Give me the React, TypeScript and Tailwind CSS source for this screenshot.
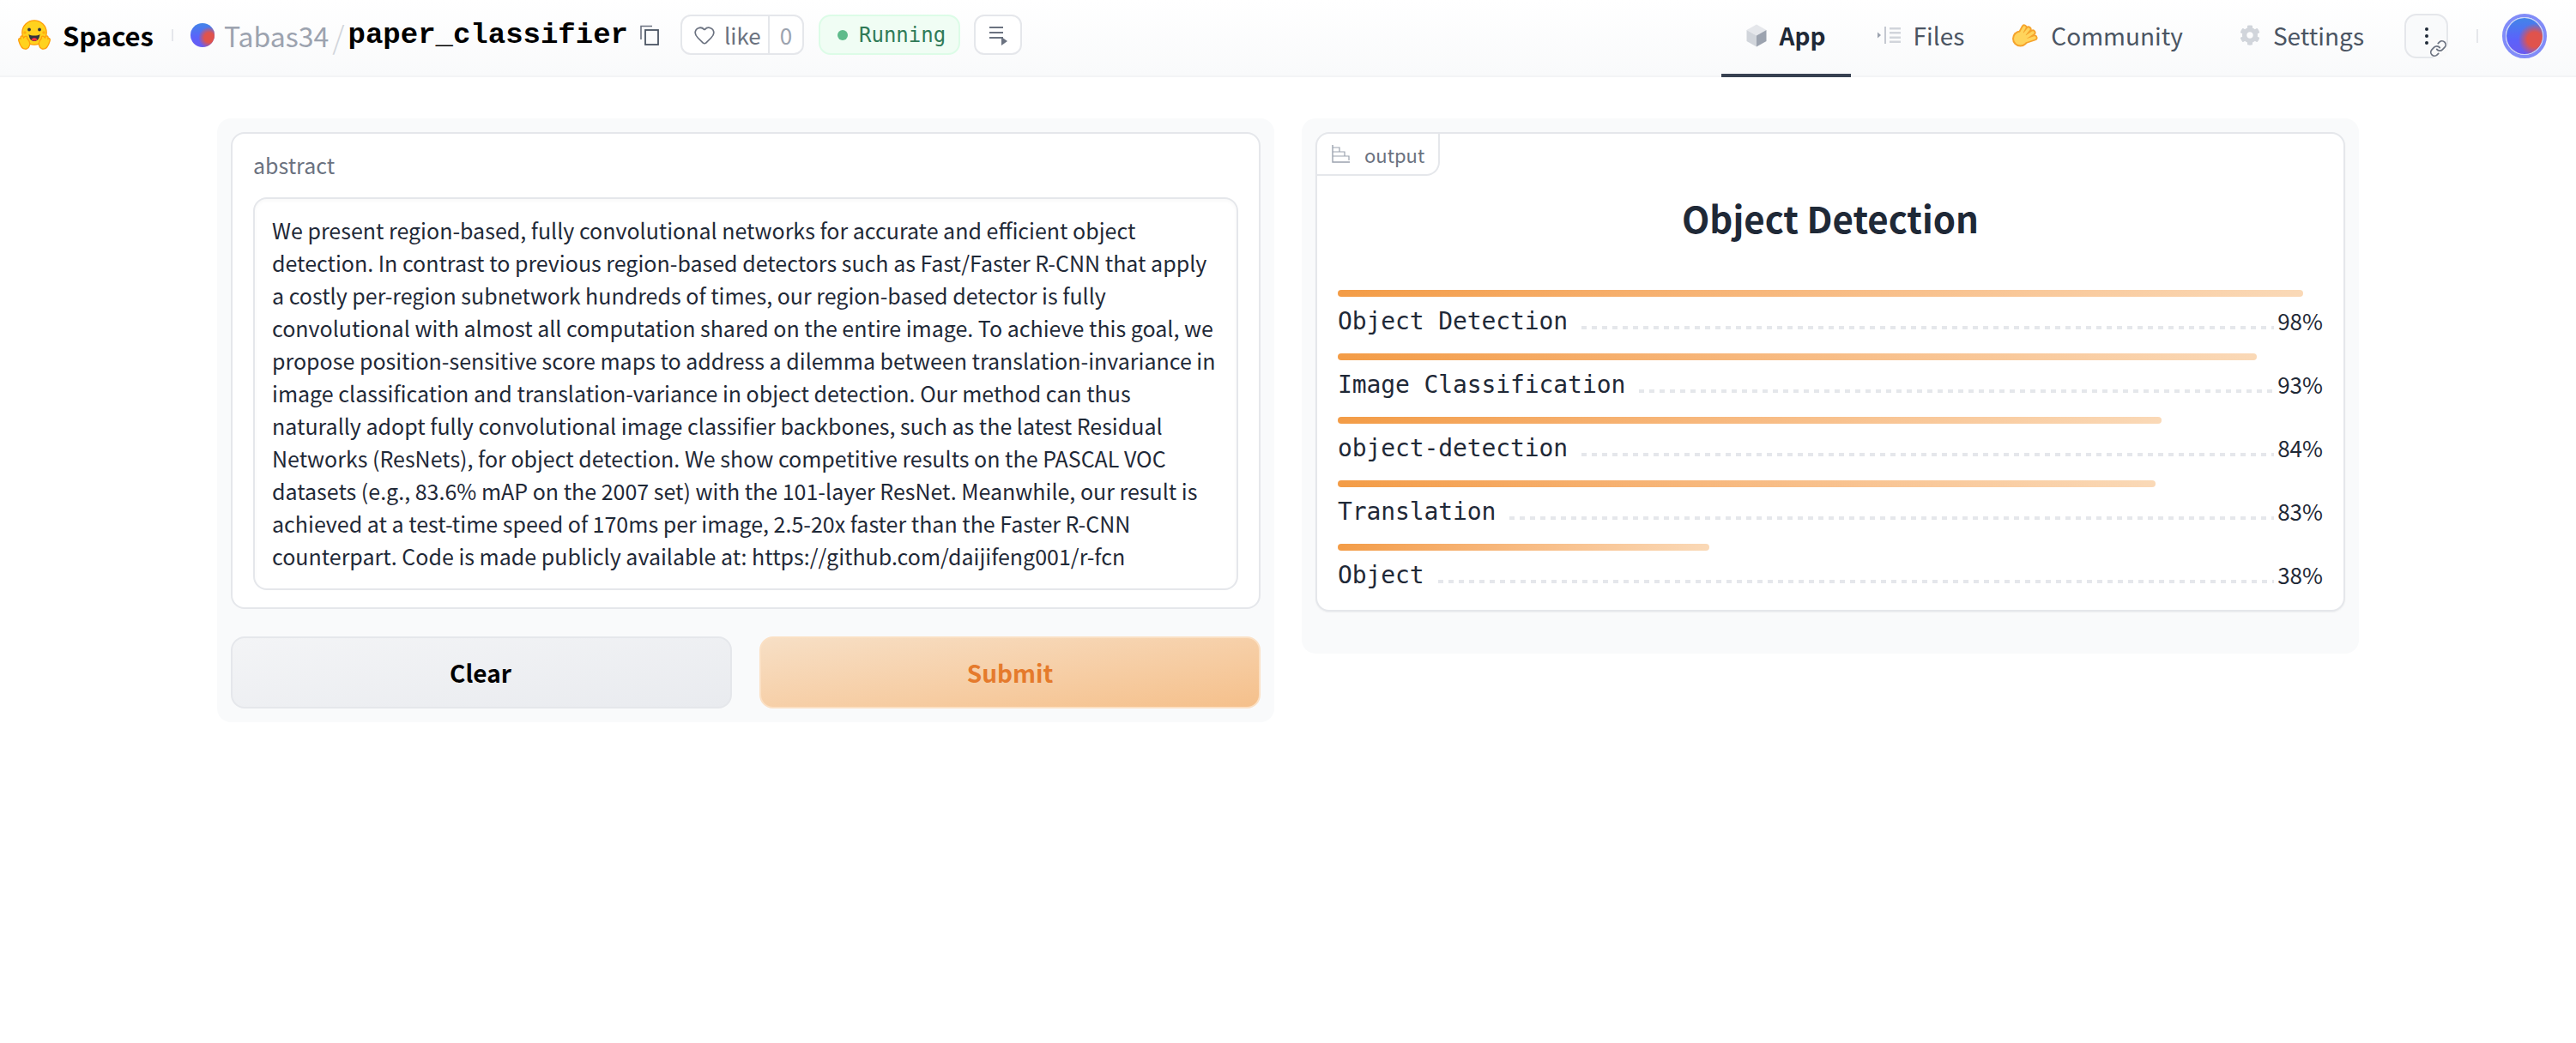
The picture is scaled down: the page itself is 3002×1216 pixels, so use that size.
import type { ReactNode } from "react";
import { Heart, Link } from "lucide-react";
import { FaCog } from "react-icons/fa";

const sans = "font-['Noto_Sans_CJK_JP',sans-serif]";
const mono = "font-['DejaVu_Sans_Mono',monospace]";
const monoBold = "font-['Liberation_Mono',monospace]";

const ABSTRACT =
  "We present region-based, fully convolutional networks for accurate and efficient object detection. In contrast to previous region-based detectors such as Fast/Faster R-CNN that apply a costly per-region subnetwork hundreds of times, our region-based detector is fully convolutional with almost all computation shared on the entire image. To achieve this goal, we propose position-sensitive score maps to address a dilemma between translation-invariance in image classification and translation-variance in object detection. Our method can thus naturally adopt fully convolutional image classifier backbones, such as the latest Residual Networks (ResNets), for object detection. We show competitive results on the PASCAL VOC datasets (e.g., 83.6% mAP on the 2007 set) with the 101-layer ResNet. Meanwhile, our result is achieved at a test-time speed of 170ms per image, 2.5-20x faster than the Faster R-CNN counterpart. Code is made publicly available at: https://github.com/daijifeng001/r-fcn";

const RESULTS = [
  { label: "Object Detection", pct: 98, width: 98 },
  { label: "Image Classification", pct: 93, width: 93.3 },
  { label: "object-detection", pct: 84, width: 83.6 },
  { label: "Translation", pct: 83, width: 83 },
  { label: "Object", pct: 38, width: 37.7 },
];

function HfLogo() {
  return (
    <svg width="38" height="35" viewBox="0 0 38 35" className="shrink-0">
      <circle cx="19" cy="15" r="14.200" fill="#FFD21E" stroke="#FF9D0B" strokeWidth="1.3" />
      <circle cx="13" cy="11.500" r="1.900" fill="#32343D" />
      <circle cx="25" cy="11.500" r="1.900" fill="#32343D" />
      <circle cx="8" cy="15" r="1.700" fill="#FF9D0B" opacity="0.7" />
      <circle cx="30" cy="15" r="1.700" fill="#FF9D0B" opacity="0.7" />
      <path d="M12.500 17 C15 19 23 19 25.500 17 C25 23 22 25 19 25 C16 25 13 23 12.500 17Z" fill="#32343D" />
      <path d="M15.500 23 C17 20.800 21 20.800 22.500 23 C21 25.200 17 25.200 15.500 23Z" fill="#FF323D" />
      <path d="M1 25 C0 22 2 21 3 22 L3 20 C4 18 6 19 6.500 21 L8 19.500 C10 18.500 11 20 10.500 21.500 L12 23.500 C15 27 14 32 10 34 C6 35 3 32 1 25Z" fill="#FFD21E" stroke="#FF9D0B" strokeWidth="1.300" />
      <path d="M37 25 C38 22 36 21 35 22 L35 20 C34 18 32 19 31.500 21 L30 19.500 C28 18.500 27 20 27.500 21.500 L26 23.500 C23 27 24 32 28 34 C32 35 35 32 37 25Z" fill="#FFD21E" stroke="#FF9D0B" strokeWidth="1.300" />
    </svg>
  );
}

function CopyIcon() {
  return (
    <svg width="22" height="24" viewBox="0 0 22 24" fill="none" className="shrink-0">
      <path d="M1 17V1.500H14" stroke="#6b7280" strokeWidth="1.600" />
      <rect x="6" y="6" width="15" height="17" stroke="#4b5563" strokeWidth="1.800" />
    </svg>
  );
}

function QueueIcon() {
  return (
    <svg width="22" height="24" viewBox="0 0 22 24" className="shrink-0">
      <path d="M1 2h16v2H1zM1 8h16v2H1zM1 14h16v2H1z" fill="#6b7280" />
      <path d="M15 14l7 5-7 5z" fill="#6b7280" />
    </svg>
  );
}

function CubeIcon() {
  return (
    <svg width="24" height="27" viewBox="0 0 24 27" className="shrink-0">
      <path d="M12 0.500 L23.500 7 L12 13.500 L0.500 7Z" fill="#e5e7eb" />
      <path d="M0.500 7 L12 13.500 V26.500 L0.500 20Z" fill="#d1d5db" />
      <path d="M23.500 7 L12 13.500 V26.500 L23.500 20Z" fill="#9ca3af" />
    </svg>
  );
}

function FilesIcon() {
  return (
    <svg width="27" height="20" viewBox="0 0 27 20" className="shrink-0">
      <path d="M0 6.500l4 3.500-4 3.500z" fill="#9ca3af" />
      <path d="M8 0h2v20H8z" fill="#c5c9d1" />
      <path d="M14 1h13v2.500H14zM14 6h13v2.500H14zM14 11.500h13v2.500H14zM14 16.500h13v2.500H14z" fill="#d1d5db" />
    </svg>
  );
}

function WaveIcon() {
  const d = "M9 18 L16 5 M12 18 L21 7 M14 19 L26 11 M16 21 L28 17";
  return (
    <svg width="32" height="28" viewBox="0 0 32 28" className="shrink-0">
      <g stroke="#F5A32C" strokeLinecap="round" fill="none">
        <path d={d} strokeWidth="7" />
      </g>
      <circle cx="11.500" cy="18" r="9.500" fill="#F5A32C" />
      <g stroke="#FFD45C" strokeLinecap="round" fill="none">
        <path d={d} strokeWidth="3.500" />
      </g>
      <circle cx="11.500" cy="18" r="7.500" fill="#FFD45C" />
    </svg>
  );
}

function BarsIcon() {
  return (
    <svg width="21" height="21" viewBox="0 0 21 21" fill="none" className="shrink-0">
      <path d="M1 0v20h20" stroke="#9ca3af" strokeWidth="1.400" />
      <path d="M1 3h8v5H1M1 8h14v5H1M1 13h19v5" stroke="#9ca3af" strokeWidth="1.200" />
    </svg>
  );
}

function Avatar({ size }: { size: number }) {
  return (
    <svg width={size} height={size} viewBox="0 0 28 28" className="shrink-0">
      <defs>
        <linearGradient id={`avb${size}`} x1="0.500" y1="0" x2="0.500" y2="1">
          <stop offset="0" stopColor="#4285e8" />
          <stop offset="0.6" stopColor="#5b62fb" />
          <stop offset="1" stopColor="#6a5cf0" />
        </linearGradient>
        <radialGradient id={`avr${size}`} cx="0.780" cy="0.600" r="0.450">
          <stop offset="0.45" stopColor="#e0534c" />
          <stop offset="1" stopColor="#e0534c" stopOpacity="0" />
        </radialGradient>
      </defs>
      <circle cx="14" cy="14" r="14" fill={`url(#avb${size})`} />
      <circle cx="14" cy="14" r="14" fill={`url(#avr${size})`} />
    </svg>
  );
}

function NavTab({
  icon,
  label,
  active,
  className = "",
}: {
  icon: ReactNode;
  label: string;
  active?: boolean;
  className?: string;
}) {
  return (
    <div
      className={`flex h-[90px] items-center gap-[15px] border-b-4 px-[29px] pb-[4px] text-[28px] ${
        active ? "border-[#374151] font-semibold text-[#1f2937]" : "border-transparent text-[#4b5563]"
      } ${className}`}
    >
      {icon}
      <span className="leading-[40px]">{label}</span>
    </div>
  );
}

export default function App() {
  return (
    <div className={`min-h-[1216px] w-[3002px] bg-white ${sans}`}>
      <header className="flex h-[90px] items-start border-b-2 border-[#f3f4f6] bg-gradient-to-b from-white to-[#f9fafb] pl-[21px] pr-[34px]">
        <div className="flex h-[81px] items-center">
          <HfLogo />
          <span className="ml-[14px] text-[31px] font-bold leading-[40px] text-black">Spaces</span>
          <span className="ml-[21px] h-[14px] w-[2px] bg-[#e5e7eb]" />
          <span className="ml-[20px]">
            <Avatar size={28} />
          </span>
          <span className="ml-[11px] text-[32px] leading-[40px] text-[#9ca3af]">Tabas34</span>
          <span className="ml-[4px] text-[36px] font-light leading-[40px] text-[#d1d5db]">/</span>
          <span className={`ml-[4px] text-[34px] font-bold leading-[40px] text-black ${monoBold}`}>paper_classifier</span>
          <span className="ml-[14px]">
            <CopyIcon />
          </span>
          <div className="ml-[25px] flex h-[47px] w-[144px] items-stretch rounded-[12px] border-2 border-[#e5e7eb] bg-white text-[26px] text-[#6b7280]">
            <div className="flex flex-1 items-center gap-[10px] pl-[13px]">
              <Heart size={26} strokeWidth={1.6} className="text-[#6b7280]" />
              <span className="leading-[36px]">like</span>
            </div>
            <div className="flex w-[40px] items-center justify-center border-l-2 border-[#e5e7eb] text-[#9ca3af]">0</div>
          </div>
          <div className="ml-[17px] flex h-[47px] w-[165px] items-center gap-[13px] rounded-[14px] border-2 border-[#dcfce7] bg-[#f0fdf4] pl-[20px] text-[24px] text-[#2f7a57]">
            <span className="h-[12px] w-[12px] rounded-full bg-[#5fbb8b]" />
            <span className={`leading-[36px] ${mono}`}>Running</span>
          </div>
          <div className="ml-[16px] flex h-[47px] w-[56px] items-center justify-center rounded-[12px] border-2 border-[#e5e7eb] bg-white">
            <QueueIcon />
          </div>
        </div>
        <nav className="ml-auto flex items-center">
          <NavTab icon={<CubeIcon />} label="App" active />
          <NavTab icon={<FilesIcon />} label="Files" className="ml-[2px]" />
          <NavTab icon={<WaveIcon />} label="Community" className="-ml-[4px]" />
          <NavTab icon={<FaCog size={24} className="text-[#d1d5db]" />} label="Settings" className="ml-[8px]" />
        </nav>
        <div className="flex h-[84px] items-center">
          <div className="relative ml-[18px] flex h-[52px] w-[51px] items-center justify-center rounded-[14px] border-2 border-[#e5e7eb] bg-[#f9fafb]">
            <span className="flex flex-col gap-[4px]">
              <span className="h-[4px] w-[4px] rounded-full bg-[#1f2937]" />
              <span className="h-[4px] w-[4px] rounded-full bg-[#1f2937]" />
              <span className="h-[4px] w-[4px] rounded-full bg-[#1f2937]" />
            </span>
            <span className="absolute -bottom-[2px] -right-[2px] flex h-[24px] w-[24px] items-center justify-center rounded-full bg-[#fafafa]">
              <Link size={21} strokeWidth={2} className="text-[#6b7280]" />
            </span>
          </div>
          <span className="ml-[33px] h-[16px] w-[2px] bg-[#e5e7eb]" />
          <div className="ml-[28px] rounded-full border-[4px] border-[#818cf8]">
            <div className="rounded-full border border-[#cbd5f5]">
              <Avatar size={42} />
            </div>
          </div>
        </div>
      </header>

      <main className="mx-auto mt-[48px] grid w-[2496px] grid-cols-2 items-start gap-[32px]">
        <section className="flex flex-col gap-[32px] rounded-[16px] bg-[#f9fafb] p-[16px]">
          <div className="h-[556px] rounded-[16px] border-2 border-[#e5e7eb] bg-white px-[24px]">
            <div className="flex h-[74px] items-center text-[25px] text-[#6b7280]">abstract</div>
            <div className="rounded-[16px] border-2 border-[#e5e7eb] bg-white pb-[19px] pl-[20px] pr-[22px] pt-[17px] text-[25px] leading-[38px] text-[#1f2937] shadow-[inset_0_2px_4px_rgba(0,0,0,0.03)]">
              {ABSTRACT}
            </div>
          </div>
          <div className="grid grid-cols-2 gap-[32px]">
            <button className="flex h-[84px] items-center justify-center rounded-[16px] border-2 border-[#e5e7eb] bg-gradient-to-br from-[#f3f4f6] to-[#e9ebef] pr-[2px] text-[28px] font-semibold text-black">
              Clear
            </button>
            <button className="flex h-[84px] items-center justify-center rounded-[16px] border-2 border-[#fbe0c4] bg-gradient-to-br from-[#f7dfc5] to-[#f5c08b] text-[28px] font-semibold text-[#e57a2c]">
              Submit
            </button>
          </div>
        </section>

        <section className="rounded-[16px] bg-[#f9fafb] px-[16px] pb-[49px] pt-[16px]">
          <div className="h-[559px] rounded-[16px] border-2 border-[#e5e7eb] bg-white shadow-[0_1px_2px_rgba(0,0,0,0.05)]">
            <div className="flex h-[49px] w-[143px] items-center gap-[17px] rounded-br-[16px] border-b-2 border-r-2 border-[#e5e7eb] pl-[17px] text-[22px] text-[#6b7280]">
              <BarsIcon />
              <span className="leading-[32px]">output</span>
            </div>
            <h2 className="mt-[19px] text-center text-[42px] font-bold leading-[60px] text-[#1f2937]">Object Detection</h2>
            <div className="mt-[54px] px-[24px]">
              {RESULTS.map((r) => (
                <div key={r.label} className="mb-[18px]">
                  <div
                    className="h-[8px] rounded-[4px] bg-gradient-to-r from-[#f39c46] to-[#fad9b7]"
                    style={{ width: `${r.width}%` }}
                  />
                  <div className="mt-[8px] flex h-[40px] items-center text-[#1f2937]">
                    <span className={`pt-[2px] text-[28px] leading-[38px] tracking-[-0.1px] ${mono}`}>{r.label}</span>
                    <span className="ml-[16px] mt-[16px] h-[4px] flex-1 bg-[repeating-linear-gradient(90deg,#e5e7eb_0,#e5e7eb_6px,transparent_6px,transparent_12px)]" />
                    <span className="ml-[4px] text-[26px] leading-[38px]">{r.pct}%</span>
                  </div>
                </div>
              ))}
            </div>
          </div>
        </section>
      </main>
    </div>
  );
}
